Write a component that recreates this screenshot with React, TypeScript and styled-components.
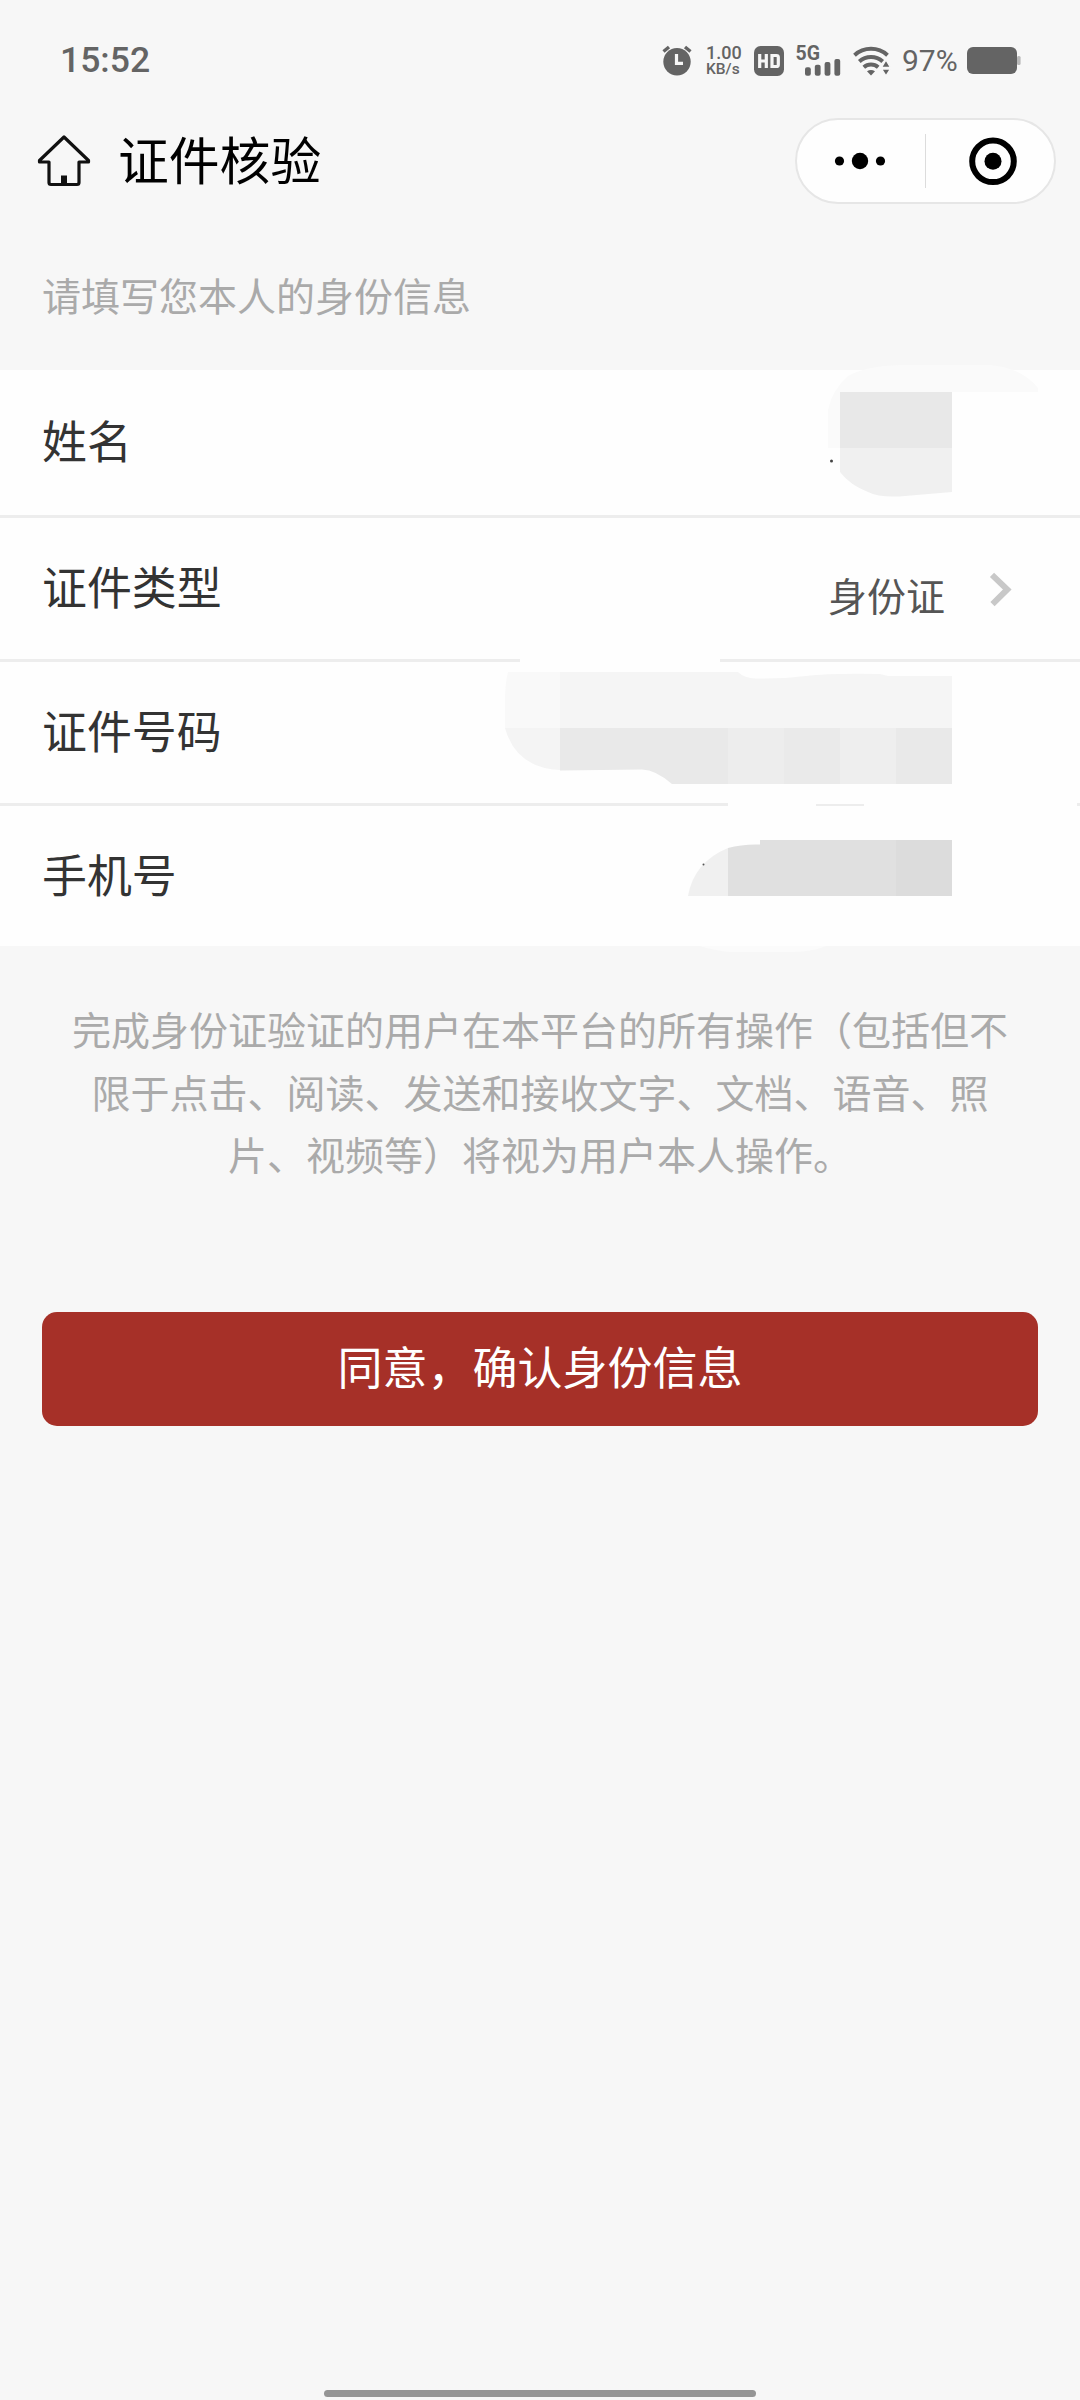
import React from "react";
import styled, { createGlobalStyle } from "styled-components";

const CJK = `"Noto Sans CJK SC", "Noto Sans", sans-serif`;
const INK = "#646464";

const GlobalStyle = createGlobalStyle`
  *, *::before, *::after { box-sizing: border-box; }
  html, body { margin: 0; padding: 0; background: #f7f7f7; }
`;

const Screen = styled.div`
  width: 1080px;
  height: 2400px;
  display: flex;
  flex-direction: column;
  overflow: hidden;
  background: #f7f7f7;
  font-family: ${CJK};
`;

const StatusBar = styled.div`
  height: 118px;
  display: flex;
  justify-content: space-between;
  align-items: center;
  padding: 3px 60px 0 60px;
  font-family: Roboto, sans-serif;
  color: ${INK};
`;

const Clock = styled.div`
  padding-bottom: 2px;
  font-size: 35.5px;
  font-weight: 500;
  line-height: 42px;
`;

const StatusIcons = styled.div`
  display: flex;
  align-items: center;
`;

const StatusIcon = styled.svg<{ $gap?: number }>`
  display: block;
  flex: none;
  overflow: visible;
  margin-right: ${(p) => p.$gap ?? 0}px;
`;

const NetSpeed = styled.div`
  width: 36px;
  margin-right: 12px;
  display: flex;
  flex-direction: column;
  font-weight: 500;
`;

const SpeedValue = styled.span`
  font-size: 18px;
  line-height: 16px;
`;

const SpeedUnit = styled.span`
  font-size: 15.5px;
  line-height: 16px;
`;

const BatteryText = styled.span`
  width: 65px;
  font-size: 30px;
  line-height: 34px;
`;

const NavBar = styled.header`
  height: 86px;
  display: flex;
  align-items: center;
  padding: 0 24px 0 36px;
`;

const Title = styled.h1`
  margin: -6px auto 0 26px;
  font-size: 50.8px;
  line-height: 76px;
  font-weight: 400;
  color: #000;
`;

const Capsule = styled.div`
  width: 261px;
  height: 86px;
  display: flex;
  align-items: center;
  border: 2px solid #e6e6e6;
  border-radius: 43px;
  background: #fefefe;
`;

const CapsuleButton = styled.button`
  flex: 1;
  height: 100%;
  display: flex;
  align-items: center;
  justify-content: center;
  padding: 0;
  border: 0;
  background: none;
`;

const CapsuleDivider = styled.div`
  width: 1px;
  height: 54px;
  background: #dcdcdc;
`;

const Prompt = styled.p`
  height: 166px;
  margin: 0;
  padding: 61px 42px 0;
  font-size: 39px;
  line-height: 58px;
  color: #aaa;
`;

const List = styled.section`
  position: relative;
  display: flex;
  flex-direction: column;
  background: #fefefe;
`;

const Row = styled.div<{ $height: number; $last?: boolean }>`
  height: ${(p) => p.$height}px;
  display: flex;
  align-items: center;
  justify-content: space-between;
  padding: 0 68px 0 42px;
  border-bottom: ${(p) => (p.$last ? "0" : "3px solid #ededed")};
`;

const Label = styled.span<{ $lift?: number }>`
  padding-bottom: ${(p) => p.$lift ?? 6}px;
  font-size: 44.9px;
  line-height: 66px;
  color: #333;
`;

const Value = styled.span`
  display: flex;
  align-items: center;
  gap: 42px;
  font-size: 39px;
  line-height: 58px;
  color: #555;
`;

const ValueText = styled.span`
  padding-top: 11px;
`;

const Mosaic = styled.svg`
  position: absolute;
  left: 0;
  top: -30px;
  pointer-events: none;
`;

const Notice = styled.p`
  margin: 0;
  padding: 51px 60px 0;
  font-size: 39px;
  line-height: 62.5px;
  text-align: center;
  color: #aaa;
`;

const Confirm = styled.button`
  flex: none;
  height: 114px;
  margin: 127px 42px 0;
  padding: 0 0 5px;
  border: 0;
  border-radius: 15px;
  background: #a63028;
  color: #fff;
  font-family: ${CJK};
  font-size: 45px;
  line-height: 66px;
`;

const HomeIndicator = styled.div`
  flex: none;
  width: 432px;
  height: 7px;
  margin: auto auto 3px;
  border-radius: 4px;
  background: #959595;
`;

const AlarmIcon = () => (
  <StatusIcon $gap={13} width="31" height="31" viewBox="0 0 31 31">
    <circle cx="15" cy="16.7" r="13.7" fill={INK} />
    <path d="M1.5 6.5 7 2M28.5 6.5 23 2" stroke={INK} strokeWidth="3.4" fill="none" />
    <path d="M14.5 9v9.3H21" stroke="#f7f7f7" strokeWidth="3.2" fill="none" />
  </StatusIcon>
);

const HdIcon = () => (
  <StatusIcon $gap={12} width="30" height="30" viewBox="0 0 30 30">
    <rect width="30" height="30" rx="6.5" fill={INK} />
    <path
      d="M5.7 8v14M12.3 8v14M5.7 15h6.6M18 9.5h4.5q1.8 0 1.8 1.8v7.4q0 1.8-1.8 1.8H18z"
      stroke="#f7f7f7"
      strokeWidth="3.2"
      fill="none"
    />
  </StatusIcon>
);

const SignalIcon = () => (
  <StatusIcon $gap={12} width="45" height="31" viewBox="0 0 45 31">
    <text x="-0.5" y="15.2" fontFamily="Roboto, sans-serif" fontSize="19.5" fontWeight="700" fill={INK}>
      5G
    </text>
    <g fill={INK}>
      <rect x="9" y="22.2" width="5.8" height="8.5" rx="2" />
      <rect x="18.8" y="19.7" width="5.8" height="11" rx="2" />
      <rect x="28.6" y="17" width="5.8" height="13.7" rx="2" />
      <rect x="38.4" y="14" width="5.8" height="16.7" rx="2" />
    </g>
  </StatusIcon>
);

const WifiIcon = () => (
  <StatusIcon $gap={12} width="37" height="30" viewBox="0 0 37 30">
    <g fill="none" stroke={INK} strokeWidth="4">
      <path d="M1.5 9.2a24.5 24.5 0 0 1 33 0" />
      <path d="M6.3 15.4a17.6 17.6 0 0 1 23.4 0" />
      <path d="M10.8 21.2a11 11 0 0 1 14.4 0" />
    </g>
    <path d="M14 25.2q4-2.6 8 0L18 29.5z" fill={INK} />
    <path d="M33 14l4.5 7.5h-9zM33 30l4.5-7h-9z" fill={INK} stroke="#f7f7f7" strokeWidth="1.4" />
  </StatusIcon>
);

const BatteryIcon = () => (
  <StatusIcon width="53" height="27" viewBox="0 0 53 27">
    <rect x="50" y="9" width="3.6" height="9" rx="1.5" fill="#b9b9b9" />
    <rect width="50" height="27" rx="6" fill={INK} />
  </StatusIcon>
);

const HomeIcon = () => (
  <svg width="56" height="54" viewBox="0 0 56 54">
    <path
      d="M28 3 3.5 26.5V28H13v20.5q0 2 2 2h26q2 0 2-2V28h9.5v-1.5z"
      fill="none"
      stroke="#111"
      strokeWidth="3.2"
      strokeLinejoin="round"
    />
    <rect x="25" y="41.5" width="6" height="9" fill="#111" />
  </svg>
);

const Chevron = () => (
  <svg width="25" height="36" viewBox="0 0 25 36">
    <path d="M5 3.8 20.3 18.5 5.5 33.2" fill="none" stroke="#c8c8c8" strokeWidth="6" />
  </svg>
);

const MosaicLayer = () => (
  <Mosaic width="1080" height="620" viewBox="0 340 1080 620">
    {/* name */}
    <path
      d="M828 448V410Q832 390 848 376Q866 366 900 365H990Q1022 368 1038 388V392H952V448z"
      fill="#fafafa"
    />
    <path d="M840 392H952V448H840z" fill="#e8e8e8" />
    <path d="M840 448H952V492L905 496Q880 498 868 492Q850 485 840 472z" fill="#f0f0f0" />
    <circle cx="831.5" cy="461" r="1.5" fill="#444" />
    {/* id number */}
    <path d="M520 657H720V664H520z" fill="#fefefe" />
    <path d="M508 672H560V728H505V700Q505 684 508 672z" fill="#f9f9f9" />
    <path d="M505 728H560V770Q516 768 505 728z" fill="#f4f4f4" />
    <path
      d="M560 672H738Q744 678 756 678.5Q782 679 806 676Q830 673 880 674L888 676H952V728H560z"
      fill="#f5f5f5"
    />
    <path d="M560 728H728V784H672Q656 770 642 769.5L560 770.5z" fill="#e9e9e9" />
    <path d="M728 728H784V784H728z" fill="#ededed" />
    <path d="M784 728H840V784H784z" fill="#eaeaea" />
    <path d="M840 728H896V784H840z" fill="#eeeeee" />
    <path d="M896 728H952V784H896z" fill="#e9e9e9" />
    {/* phone number */}
    <path d="M728 801H816V808H728zM816 801H864V804H816zM864 801H1077V808H864z" fill="#fefefe" />
    <path d="M688 896Q694 862 728 848V896z" fill="#f0f0f0" />
    <path d="M728 848Q742 844 760 844.5V840H896V896H728z" fill="#e0e0e0" />
    <path d="M896 840H952V896H896z" fill="#dcdcdc" />
    <circle cx="703.5" cy="864.5" r="1" fill="#555" />
    <path d="M700 946H826Q812 952 790 952H730Q712 950 700 946z" fill="#fbfbfb" />
  </Mosaic>
);

export default function App() {
  return (
    <Screen>
      <GlobalStyle />
      <StatusBar>
        <Clock>15:52</Clock>
        <StatusIcons>
          <AlarmIcon />
          <NetSpeed>
            <SpeedValue>1.00</SpeedValue>
            <SpeedUnit>KB/s</SpeedUnit>
          </NetSpeed>
          <HdIcon />
          <SignalIcon />
          <WifiIcon />
          <BatteryText>97%</BatteryText>
          <BatteryIcon />
        </StatusIcons>
      </StatusBar>
      <NavBar>
        <HomeIcon />
        <Title>证件核验</Title>
        <Capsule>
          <CapsuleButton aria-label="更多">
            <svg width="54" height="18" viewBox="0 0 54 18">
              <circle cx="5.5" cy="9" r="4.6" />
              <circle cx="26" cy="9" r="8.2" />
              <circle cx="46.5" cy="9" r="4.6" />
            </svg>
          </CapsuleButton>
          <CapsuleDivider />
          <CapsuleButton aria-label="关闭">
            <svg width="56" height="50" viewBox="0 0 56 50">
              <circle cx="31" cy="25.3" r="20.8" fill="none" stroke="#000" strokeWidth="6" />
              <circle cx="31" cy="25.3" r="8.5" />
            </svg>
          </CapsuleButton>
        </Capsule>
      </NavBar>
      <Prompt>请填写您本人的身份信息</Prompt>
      <List>
        <Row $height={148}>
          <Label>姓名</Label>
        </Row>
        <Row $height={144}>
          <Label>证件类型</Label>
          <Value>
            <ValueText>身份证</ValueText>
            <Chevron />
          </Value>
        </Row>
        <Row $height={144}>
          <Label>证件号码</Label>
        </Row>
        <Row $height={140} $last>
          <Label $lift={4}>手机号</Label>
        </Row>
        <MosaicLayer />
      </List>
      <Notice>
        完成身份证验证的用户在本平台的所有操作（包括但不限于点击、阅读、发送和接收文字、文档、语音、照片、视频等）将视为用户本人操作。
      </Notice>
      <Confirm>同意，确认身份信息</Confirm>
      <HomeIndicator />
    </Screen>
  );
}
